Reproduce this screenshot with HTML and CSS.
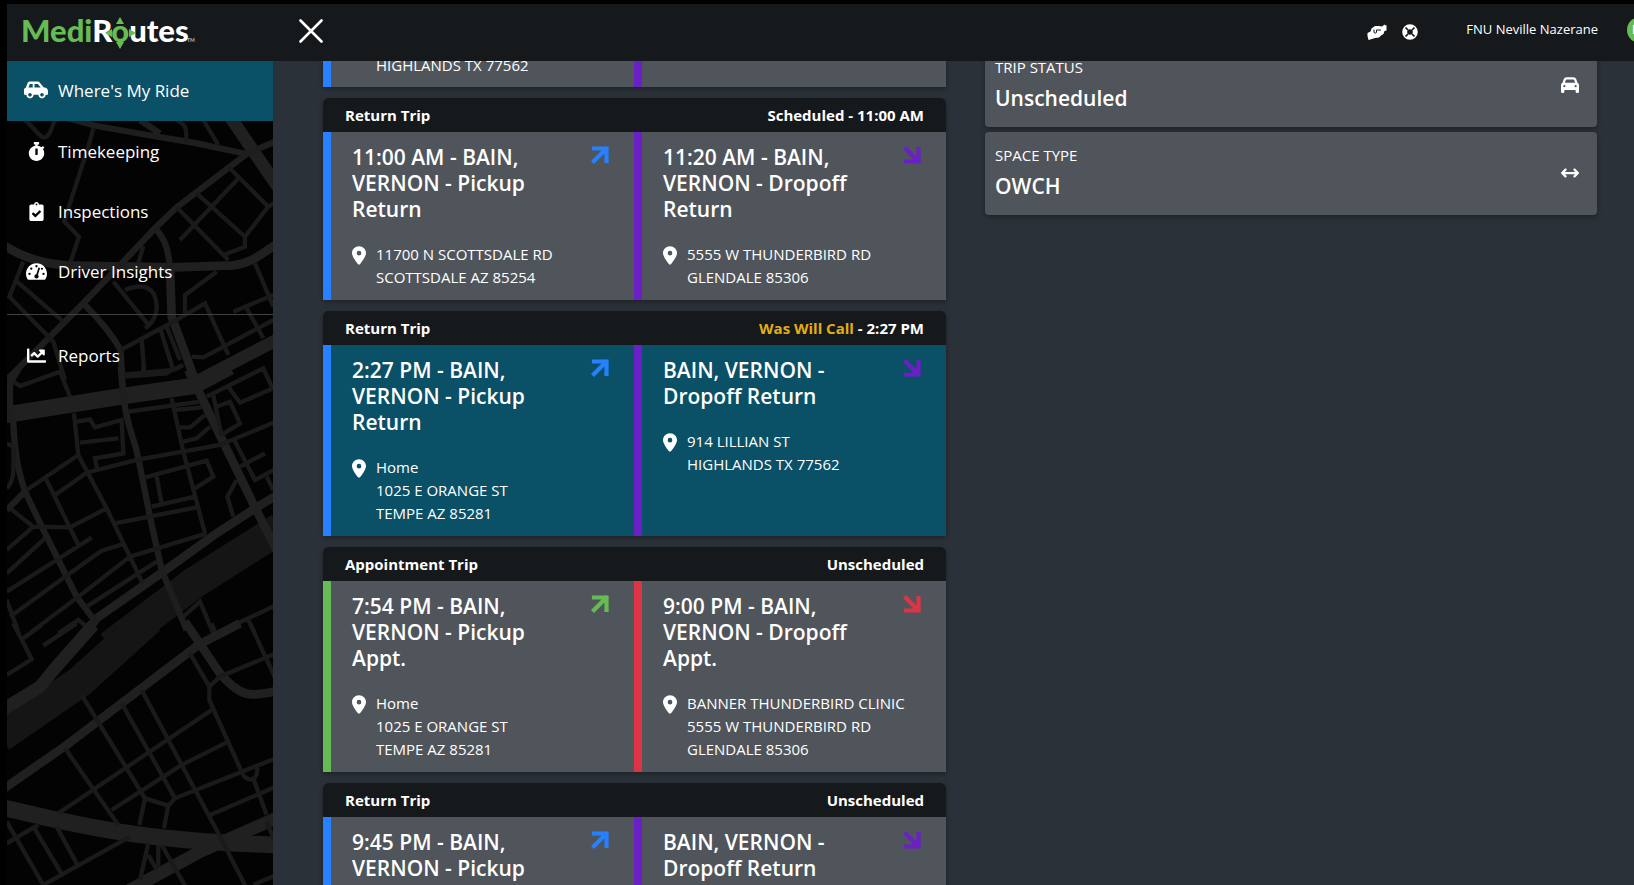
FILE: index.html
```html
<!DOCTYPE html>
<html lang="en">
<head>
<meta charset="utf-8">
<title>MediRoutes - Where's My Ride</title>
<link rel="stylesheet" href="styles.css">
</head>
<body>
<svg class="defs" aria-hidden="true">
  <symbol id="pin" viewBox="0 0 384 512"><path d="M215.7 499.2C267 435 384 279.4 384 192C384 86 298 0 192 0S0 86 0 192c0 87.400 117 243 168.300 307.200c12.300 15.300 35.100 15.300 47.400 0zM192 128a64 64 0 1 1 0 128 64 64 0 1 1 0-128z"/></symbol>
  <symbol id="up" viewBox="0 0 18 18"><path d="M3 2.500H15.500V15M15 3L3 15" fill="none" stroke="currentColor" stroke-width="4.200" stroke-linecap="square"/></symbol>
  <symbol id="down" viewBox="0 0 18 18"><path d="M3 15.500H15.500V3M15 15L3 3" fill="none" stroke="currentColor" stroke-width="4.200" stroke-linecap="square"/></symbol>
</svg>
<div class="app">
  <header class="topbar">
    <a class="brand" href="#" aria-label="MediRoutes">
      <svg width="180" height="56" viewBox="20 4 180 56">
        <g class="brand-text">
          <text x="21" y="41"><tspan class="brand-green">Medi</tspan><tspan>R</tspan><tspan class="brand-green">o</tspan><tspan>utes</tspan></text>
        </g>
        <text class="brand-tm" x="187" y="41">TM</text>
        <path class="brand-green" d="M120 16l4 7h-8zM120 48l-4-7h8zM105 32l7-4v8zM136 32l-7-4v8z"/>
      </svg>
    </a>
    <button class="close" type="button" aria-label="Close menu">
      <svg width="24" height="24" viewBox="0 0 24 24"><path d="M1.500 1.500l21 21M22.500 1.500l-21 21" fill="none" stroke="#fff" stroke-width="2.600" stroke-linecap="round"/></svg>
    </button>
    <div class="tools">
      <button type="button" aria-label="Assistance">
        <svg width="20" height="16" viewBox="0 0 20 16"><path fill="currentColor" d="M.5 9l3-1.500 1-3L8 2h4l3 .5L17.500.5l.8 1L19.500 1v5.500l-2 .5-1 3-2.500 1.500-2 2-4 .5-3 1-3.500 1L.5 12z"/><path d="M7 5.500v2.500c0 1.500 2.500 1.500 2.500 0V6h4.500" fill="none" stroke="#15191c" stroke-width="1"/></svg>
      </button>
      <button type="button" aria-label="Support">
        <svg width="16" height="16" viewBox="0 0 16 16"><circle cx="8" cy="8" r="5.300" fill="none" stroke="currentColor" stroke-width="5"/><path d="M3.500 3.500l2.500 2.500M12.500 3.500L10 6M3.500 12.500L6 10M12.500 12.500L10 10" stroke="#15191c" stroke-width="1.700"/></svg>
      </button>
    </div>
    <div class="user"><span>FNU Neville Nazerane</span><span class="avatar">FN</span></div>
  </header>

  <nav class="sidebar" aria-label="Main">
    <svg class="map" viewBox="7 61 266 824" preserveAspectRatio="xMidYMin slice" aria-hidden="true">
      <g transform="translate(0 120) scale(.3333)">
        <path class="r3" d="M690-10L840 210"/>
        <path class="r2" d="M15 378C80 420 150 435 220 437L520 442 700 436C750 432 780 405 840 365M510 440L515 590 585 780"/>
        <path class="r15" d="M150-20L290 18 460 48 580 68 740 102M835 60L740 102 530 262 465 325 370 425 250 550 20 780M465 325C500 360 505 400 510 440M250 550C310 610 345 660 362 690L368 800M420 0L480 40"/>
        <path class="r1" d="M75 0C110 30 120 55 135 52S155 20 165 0M280 25L265 80 205 265 193 305 237 350 212 425M530 0C570 20 555 40 560 65M610 0L655 75M685 140L805 260 830 245M720 170L540 360M590 220L735 350 735 380 670 405M805 260L735 350M530 262L685 420M430 378L415 430M70 425L28 530 160 665 195 780M45 480L190 605M340 485L450 620M375 510C400 500 440 490 460 520 480 560 470 600 435 625M362 690L530 600M425 655L433 760M480 625L520 750M500 620L540 720M365 765L520 750 550 735M530 600L615 550 685 705M555 580L555 525 650 455M700 575L820 525M740 565L790 655M765 430L820 560M575 710L610 712 830 595M660 740L820 655"/>
        <path class="r3" d="M580 790L830 660"/>
      </g>
      <g transform="translate(0 370) scale(.3333)">
        <path class="r4" d="M15 135L370 78 580 48 690-10"/>
        <path class="r5" d="M330 830L580 640 840 475"/>
        <path class="r2" d="M220 840L290 745 490 605 650 490 770 412 840 370M565 0L765 412 840 560"/>
        <path class="r15" d="M60-10L30 40 30 110 40 160C45 270 65 340 80 375L130 480 230 680 290 760M362-10L370 78C385 190 400 190 415 265L450 440 485 600 560 780M80 360L20 420"/>
        <path class="r1" d="M40 35L60 48 180 5 210 80M375 20L500 10 520-5M430-10L430 15M222 130L235 255 320 415 428 640M230 155L270 148 285 172 365 150 370 250 285 265 292 300M240 218L355 205M80 360L235 255M165 375L260 308 410 270 660 225 840 150M135 320L235 525M30 415L100 470 210 472 320 415M20 540L100 470M20 610L135 505M20 665L170 570 275 503M30 740L195 620 305 542 370 522M95 785L235 680 390 560 620 490M260 710L470 575M20 690L55 785M175 790L235 750 260 770M345 460L590 412M455 410L585 380M435 322L620 272 640 320 585 355M470 320L485 400M385 125L600 95M515 85L550 245 615 490M525 120L605 112M540 172L570 172 615 135M550 215L590 205 630 170M620 80L790-5 820 60M685 50L720 98 820 55M640 75L665 200M650 110L690 95 720 160 665 195M700 205L765 330 840 290M720 290L795 250M800 320L820 360M710 330L682 380 700 440M20 220L40 230C40 300 45 330 20 355M550 740L600 695 640 790M670 780L840 700M745 750L765 790"/>
      </g>
      <g transform="translate(0 625) scale(.3333)">
        <path class="r5" d="M0 335L240 170 450-20"/>
        <path class="r3" d="M10 253L120 185 165 130 280 0"/>
        <path class="r4" d="M10 548C190 590 400 650 840 660"/>
        <path class="r3" d="M380 800L600 680 840 575"/>
        <path class="r2" d="M10 492L200 360 595 60 720-5M555-10L660 145C720 215 750 220 840 195"/>
        <path class="r1" d="M40-5L95 103 20 150M70 40L125 0M130 62L230-5M635-5L645 20M245 210L435 520 505 542 525 520 840 395M365 235L525 520M425 195L655 625 740 790M195 370L355 600M175 565L635 255M335 555L545 420 685 350M570 85L628 185 628 225 725 440C735 475 780 470 770 425M628 185L660 155 840 80M750-5L840 190M760 460L800 570M630 570L840 480M435 520L418 600M505 542L492 610M20 655L115 600M20 590L130 780M100 605L190 755M170 605L235 725M130 780L390 635M445 655L420 765M475 660L475 725M445 690L470 735M485 660L560 790M800 590L820 640M760 780L840 745"/>
      </g>
    </svg>
    <a class="nav-item active" href="#">
      <span class="nav-icon"><svg width="24" height="20" viewBox="0 0 640 512"><path d="M544 192h-16L419.220 56.020A64.025 64.025 0 0 0 369.240 32H155.330c-26.170 0-49.700 15.930-59.420 40.230L48 194.260C20.440 201.400 0 226.210 0 256v112c0 8.840 7.160 16 16 16h48c0 53.020 42.980 96 96 96s96-42.980 96-96h128c0 53.020 42.980 96 96 96s96-42.980 96-96h48c8.840 0 16-7.160 16-16v-80c0-53.020-42.980-96-96-96zM160 432c-26.470 0-48-21.530-48-48s21.530-48 48-48 48 21.530 48 48-21.530 48-48 48zm72-240H116.930l38.400-96H232v96zm48 0V96h89.240l76.800 96H280zm200 240c-26.470 0-48-21.530-48-48s21.530-48 48-48 48 21.530 48 48-21.530 48-48 48z"/></svg></span>
      <span>Where's My Ride</span>
    </a>
    <a class="nav-item" href="#">
      <span class="nav-icon"><svg width="17" height="19" viewBox="0 0 448 512"><path d="M432 304c0 114.900-93.100 208-208 208S16 418.900 16 304c0-104 76.300-190.200 176-205.500V64h-28c-6.600 0-12-5.400-12-12V12c0-6.600 5.400-12 12-12h120c6.600 0 12 5.400 12 12v40c0 6.600-5.400 12-12 12h-28v34.500c37.500 5.800 71.700 21.600 99.700 44.600l27.500-27.500c4.700-4.700 12.300-4.700 17 0l28.300 28.300c4.700 4.700 4.700 12.300 0 17l-29.400 29.400-.6.6C419.700 223.300 432 262.200 432 304zm-176 36V188.500c0-6.600-5.400-12-12-12h-40c-6.600 0-12 5.400-12 12V340c0 6.600 5.400 12 12 12h40c6.600 0 12-5.400 12-12z"/></svg></span>
      <span>Timekeeping</span>
    </a>
    <a class="nav-item" href="#">
      <span class="nav-icon"><svg width="15" height="19" viewBox="0 0 384 512"><path d="M336 64h-80c0-35.300-28.700-64-64-64s-64 28.700-64 64H48C21.500 64 0 85.500 0 112v352c0 26.500 21.500 48 48 48h288c26.500 0 48-21.500 48-48V112c0-26.500-21.500-48-48-48zM192 40c13.300 0 24 10.700 24 24s-10.700 24-24 24-24-10.700-24-24 10.700-24 24-24zm121.200 231.800l-143 141.800c-4.700 4.700-12.300 4.600-17-.1l-82.600-83.300c-4.700-4.700-4.600-12.300.1-17L99.100 285c4.700-4.700 12.300-4.600 17 .1l46 46.400 106-105.200c4.700-4.700 12.300-4.600 17 .1l28.200 28.400c4.700 4.800 4.600 12.300-.1 17z"/></svg></span>
      <span>Inspections</span>
    </a>
    <a class="nav-item" href="#">
      <span class="nav-icon"><svg width="21" height="19" viewBox="0 0 576 512"><path d="M288 32C128.940 32 0 160.940 0 320c0 52.800 14.250 102.260 39.060 144.800 5.610 9.620 16.300 15.200 27.440 15.200h443c11.140 0 21.830-5.580 27.440-15.200C561.750 422.260 576 372.800 576 320c0-159.060-128.940-288-288-288z"/><g fill="#050505"><circle cx="288" cy="112" r="32"/><circle cx="144" cy="176" r="32"/><circle cx="96" cy="320" r="32"/><circle cx="480" cy="320" r="32"/><circle cx="438" cy="180" r="30"/><circle cx="288" cy="390" r="58"/><path d="M270 380l72-236 44 14-70 230z"/></g></svg></span>
      <span>Driver Insights</span>
    </a>
    <hr class="nav-rule">
    <a class="nav-item" href="#">
      <span class="nav-icon"><svg width="19" height="19" viewBox="0 0 512 512"><path d="M496 384H64V80c0-8.840-7.160-16-16-16H16C7.160 64 0 71.160 0 80v336c0 17.670 14.330 32 32 32h464c8.840 0 16-7.160 16-16v-32c0-8.840-7.160-16-16-16zM464 96H345.940c-21.380 0-32.090 25.850-16.970 40.970l32.400 32.400L288 242.750l-73.370-73.370c-12.500-12.500-32.760-12.500-45.250 0l-68.690 68.690c-6.250 6.250-6.250 16.380 0 22.630l22.620 22.620c6.250 6.250 16.380 6.250 22.630 0L192 237.250l73.370 73.370c12.500 12.500 32.760 12.500 45.250 0l96-96 32.400 32.400c15.120 15.120 40.970 4.410 40.970-16.970V112c.01-8.840-7.150-16-15.990-16z"/></svg></span>
      <span>Reports</span>
    </a>
  </nav>

  <main class="content">
    <section class="trips" aria-label="Trips">
      <article class="trip trip-cut">
        <div class="legs">
          <div class="leg blue"><address><span>HIGHLANDS TX 77562</span></address></div>
          <div class="leg purple"></div>
        </div>
      </article>

      <article class="trip">
        <header class="trip-head"><span>Return Trip</span><span>Scheduled - 11:00 AM</span></header>
        <div class="legs">
          <div class="leg blue">
            <div class="leg-top"><h2>11:00 AM - BAIN, VERNON - Pickup Return</h2><svg class="arrow"><use href="#up"/></svg></div>
            <address><svg class="pin"><use href="#pin"/></svg><span>11700 N SCOTTSDALE RD<br>SCOTTSDALE AZ 85254</span></address>
          </div>
          <div class="leg purple">
            <div class="leg-top"><h2>11:20 AM - BAIN, VERNON - Dropoff Return</h2><svg class="arrow"><use href="#down"/></svg></div>
            <address><svg class="pin"><use href="#pin"/></svg><span>5555 W THUNDERBIRD RD<br>GLENDALE 85306</span></address>
          </div>
        </div>
      </article>

      <article class="trip selected">
        <header class="trip-head"><span>Return Trip</span><span><span class="will-call">Was Will Call</span> - 2:27 PM</span></header>
        <div class="legs">
          <div class="leg blue">
            <div class="leg-top"><h2>2:27 PM - BAIN, VERNON - Pickup Return</h2><svg class="arrow"><use href="#up"/></svg></div>
            <address><svg class="pin"><use href="#pin"/></svg><span>Home<br>1025 E ORANGE ST<br>TEMPE AZ 85281</span></address>
          </div>
          <div class="leg purple">
            <div class="leg-top"><h2>BAIN, VERNON - Dropoff Return</h2><svg class="arrow"><use href="#down"/></svg></div>
            <address><svg class="pin"><use href="#pin"/></svg><span>914 LILLIAN ST<br>HIGHLANDS TX 77562</span></address>
          </div>
        </div>
      </article>

      <article class="trip">
        <header class="trip-head"><span>Appointment Trip</span><span>Unscheduled</span></header>
        <div class="legs">
          <div class="leg green">
            <div class="leg-top"><h2>7:54 PM - BAIN, VERNON - Pickup Appt.</h2><svg class="arrow"><use href="#up"/></svg></div>
            <address><svg class="pin"><use href="#pin"/></svg><span>Home<br>1025 E ORANGE ST<br>TEMPE AZ 85281</span></address>
          </div>
          <div class="leg red">
            <div class="leg-top"><h2>9:00 PM - BAIN, VERNON - Dropoff Appt.</h2><svg class="arrow"><use href="#down"/></svg></div>
            <address><svg class="pin"><use href="#pin"/></svg><span>BANNER THUNDERBIRD CLINIC<br>5555 W THUNDERBIRD RD<br>GLENDALE 85306</span></address>
          </div>
        </div>
      </article>

      <article class="trip">
        <header class="trip-head"><span>Return Trip</span><span>Unscheduled</span></header>
        <div class="legs">
          <div class="leg blue">
            <div class="leg-top"><h2>9:45 PM - BAIN, VERNON - Pickup</h2><svg class="arrow"><use href="#up"/></svg></div>
          </div>
          <div class="leg purple">
            <div class="leg-top"><h2>BAIN, VERNON - Dropoff Return</h2><svg class="arrow"><use href="#down"/></svg></div>
          </div>
        </div>
      </article>
    </section>

    <section class="details" aria-label="Trip details">
      <div class="detail">
        <div><p class="detail-label">TRIP STATUS</p><p class="detail-value">Unscheduled</p></div>
        <svg class="detail-icon" viewBox="0 0 512 512"><path d="M135.200 117.400L109.100 192H402.900l-26.100-74.600C372.300 104.600 360.200 96 346.600 96H165.400c-13.600 0-25.700 8.600-30.200 21.400zM39.600 196.800L74.800 96.300C88.300 57.800 124.600 32 165.400 32H346.600c40.800 0 77.100 25.800 90.600 64.300l35.200 100.500c23.200 9.600 39.600 32.500 39.600 59.200V400v48c0 17.700-14.300 32-32 32H448c-17.700 0-32-14.300-32-32V400H96v48c0 17.700-14.300 32-32 32H32c-17.700 0-32-14.300-32-32V400 256c0-26.700 16.400-49.600 39.600-59.200zM128 288a32 32 0 1 0 -64 0 32 32 0 1 0 64 0zm288 32a32 32 0 1 0 0-64 32 32 0 1 0 0 64z"/></svg>
      </div>
      <div class="detail">
        <div><p class="detail-label">SPACE TYPE</p><p class="detail-value">OWCH</p></div>
        <svg class="detail-icon" viewBox="0 0 512 512"><path d="M406.600 374.600l96-96c12.500-12.500 12.500-32.800 0-45.300l-96-96c-12.500-12.500-32.800-12.500-45.300 0s-12.500 32.800 0 45.300L402.700 224 109.300 224l41.400-41.400c12.500-12.500 12.500-32.800 0-45.300s-32.800-12.500-45.300 0l-96 96c-12.500 12.500-12.500 32.800 0 45.300l96 96c12.500 12.500 32.800 12.500 45.300 0s12.500-32.800 0-45.300L109.300 288l293.500 0-41.400 41.400c-12.500 12.500-12.500 32.800 0 45.300s32.800 12.500 45.300 0z"/></svg>
      </div>
    </section>
  </main>
</div>
</body>
</html>
```
FILE: styles.css
```css
* { box-sizing: border-box; }

body {
  margin: 0;
  background: #000;
  color: #fff;
  font-family: "Open Sans", "Noto Sans", sans-serif;
  font-size: 15px;
  line-height: 23px;
}

button {
  padding: 0;
  border: 0;
  background: none;
  color: inherit;
  cursor: pointer;
}

svg { display: block; fill: currentColor; flex: none; }
h2, p { margin: 0; }
.defs { position: absolute; width: 0; height: 0; }

.app {
  display: grid;
  grid-template: 57px minmax(0, 1fr) / 266px minmax(0, 1fr);
  height: 100vh;
  padding: 4px 0 0 7px;
  overflow: hidden;
}

/* Top bar */
.topbar {
  grid-column: 1 / -1;
  display: flex;
  align-items: center;
  background: #15191c;
  overflow: hidden;
}
.brand { width: 292px; padding-left: 13px; color: #fff; }
.brand-text { font: 900 31px "Lato", sans-serif; }
.brand-tm { font: 700 5px "Lato", sans-serif; fill: #bbb; }
.brand-green { fill: #67bb55; }
.close { margin-top: -4px; }
.tools { display: flex; gap: 15px; margin: -2px 0 0 auto; }
.user {
  display: flex;
  align-items: center;
  gap: 29px;
  margin: -6px -19px 0 48px;
  font-size: 13px;
}
.avatar {
  display: grid;
  place-items: center;
  width: 26px;
  height: 26px;
  border-radius: 50%;
  background: #67bb55;
}

/* Sidebar */
.sidebar { position: relative; background: #030303; overflow: hidden; }
.map {
  position: absolute;
  inset: 0;
  width: 100%;
  height: 100%;
  fill: none;
  stroke: #202020;
}
.r1 { stroke: #1a1a1a; stroke-width: 13; }
.r15 { stroke: #1e1e1e; stroke-width: 19; }
.r2 { stroke-width: 26; }
.r3 { stroke-width: 38; }
.r4 { stroke-width: 50; }
.r5 { stroke: #151515; stroke-width: 95; }
.nav-item {
  position: relative;
  display: flex;
  align-items: center;
  gap: 10px;
  height: 60px;
  padding: 0 0 2px 17px;
  color: #fff;
  font-size: 17px;
  text-decoration: none;
}
.nav-item.active { margin-bottom: 1px; background: #0a5066; }
.nav-icon { display: grid; place-items: center; width: 24px; }
.nav-rule {
  position: relative;
  height: 1px;
  margin: 12px 0 11px;
  border: 0;
  background: #3b4347;
}

/* Content */
.content {
  display: grid;
  grid-template-columns: minmax(0, 623fr) minmax(0, 612fr);
  align-items: start;
  gap: 39px;
  padding: 0 37px 0 50px;
  background: #2b3138;
  overflow: hidden;
}
.trips { display: grid; gap: 11px; margin-top: -7px; }
.trip {
  border-radius: 5px 5px 0 0;
  background: #50555b;
  box-shadow: 0 2px 5px rgba(0, 0, 0, .3);
}
.trip.selected { background: #0a5066; }
.trip-head {
  display: flex;
  justify-content: space-between;
  padding: 6px 22px 5px;
  border-radius: 5px 5px 0 0;
  background: #15191c;
  font-weight: 700;
}
.will-call { color: #e3ae14; }
.legs { display: grid; grid-template-columns: 311fr 312fr; }
.leg {
  display: grid;
  align-content: start;
  gap: 21px;
  padding: 12px 25px 11px 21px;
  border-left: 8px solid;
}
.trip-cut .leg { padding-top: 0; padding-bottom: 10px; }
.trip-cut address { padding-left: 24px; }
.blue { border-color: #2680ff; }
.purple { border-color: #6a1fc7; }
.green { border-color: #67bb55; }
.red { border-color: #dc3545; }
.leg-top { display: flex; justify-content: space-between; gap: 20px; }
.leg-top h2, .detail-value {
  font-size: 21px;
  font-weight: 600;
  line-height: 26px;
}
.arrow { width: 18px; height: 18px; margin-top: 2px; }
.blue .arrow { color: #2680ff; }
.purple .arrow { color: #6a1fc7; }
.green .arrow { color: #67bb55; }
.red .arrow { color: #dc3545; }
address { display: flex; gap: 10px; font-style: normal; }
.pin { width: 14px; height: 19px; margin-top: 3px; }

.details { display: grid; gap: 5px; margin-top: -17px; }
.detail {
  display: flex;
  align-items: center;
  justify-content: space-between;
  padding: 12px 18px 16px 10px;
  border-radius: 4px;
  background: #50555b;
  box-shadow: 0 2px 5px rgba(0, 0, 0, .3);
}
.detail-value { margin-top: 6px; }
.detail-icon { width: 18px; height: 18px; margin-top: 3px; }
```
